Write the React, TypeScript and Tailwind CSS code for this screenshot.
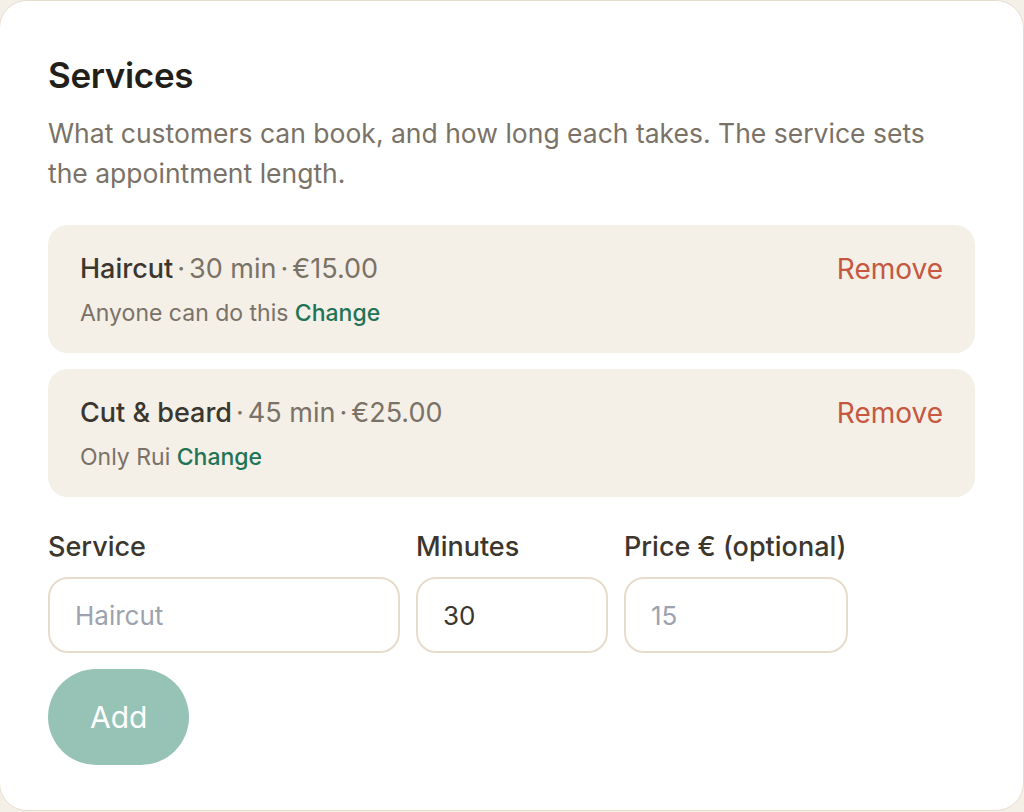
import { useState } from "react";

type Service = {
  id: string;
  name: string;
  minutes: number;
  price: number;
  who: string;
};

const initialServices: Service[] = [
  { id: "haircut", name: "Haircut", minutes: 30, price: 15, who: "Anyone can do this" },
  { id: "cut-beard", name: "Cut & beard", minutes: 45, price: 25, who: "Only Rui" },
];

const inputClass =
  "h-[76px] rounded-[20px] border-2 border-[#e6dccb] bg-white px-[25px] text-[26px] text-[#3b362e] outline-none placeholder:text-[#9ca3af] focus:border-[#97c2b6]";

const labelClass = "text-[27px] font-medium leading-[36px] text-[#3b362e]";

function ServiceRow({ service, onRemove }: { service: Service; onRemove: () => void }) {
  return (
    <div className="flex items-start justify-between rounded-[20px] bg-[#f4efe7] px-8 py-6">
      <div>
        <p className="text-[27px] leading-[40px] text-[#7a7266]">
          <span className="font-medium text-[#3b362e]">{service.name}</span>
          <span className="px-[4px]">·</span>
          {service.minutes} min
          <span className="px-[4px]">·</span>€{service.price.toFixed(2)}
        </p>
        <p className="mt-2 text-[23px] leading-[32px] text-[#7a7266]">
          {service.who}{" "}
          <button type="button" className="font-medium text-[#1f7356]">
            Change
          </button>
        </p>
      </div>
      <button
        type="button"
        onClick={onRemove}
        className="text-[28px] leading-[40px] text-[#c5583f]"
      >
        Remove
      </button>
    </div>
  );
}

export default function App() {
  const [services, setServices] = useState(initialServices);
  const [name, setName] = useState("");
  const [minutes, setMinutes] = useState("30");
  const [price, setPrice] = useState("");

  return (
    <div className="h-[812px] w-[1024px] bg-[#f4efe7] font-['Inter','Noto_Sans',sans-serif]">
      <div className="-ml-px h-[811px] w-[1025px] rounded-[28px] border border-[#e6dccb] bg-white pl-12 pr-12 pt-[52px]">
        <h2 className="text-[35px] font-semibold leading-[44px] tracking-[-0.01em] text-[#221f1a]">
          Services
        </h2>
        <p className="mt-4 max-w-[900px] text-[26.5px] leading-[40px] text-[#7a7266]">
          What customers can book, and how long each takes. The service sets the appointment
          length.
        </p>

        <div className="mt-8 flex flex-col gap-4">
          {services.map((s) => (
            <ServiceRow
              key={s.id}
              service={s}
              onRemove={() => setServices((list) => list.filter((x) => x.id !== s.id))}
            />
          ))}
        </div>

        <div className="mt-8 flex gap-4">
          <label className="flex w-[352px] flex-col gap-3">
            <span className={labelClass}>Service</span>
            <input
              value={name}
              onChange={(e) => setName(e.target.value)}
              placeholder="Haircut"
              className={inputClass}
            />
          </label>
          <label className="flex w-[192px] flex-col gap-3">
            <span className={labelClass}>Minutes</span>
            <input
              value={minutes}
              onChange={(e) => setMinutes(e.target.value)}
              inputMode="numeric"
              className={inputClass}
            />
          </label>
          <label className="flex w-[224px] flex-col gap-3">
            <span className={labelClass}>Price € (optional)</span>
            <input
              value={price}
              onChange={(e) => setPrice(e.target.value)}
              placeholder="15"
              inputMode="decimal"
              className={inputClass}
            />
          </label>
        </div>

        <button
          type="button"
          disabled={!name.trim()}
          className="mt-4 h-24 rounded-full bg-[#97c2b6] px-[42px] text-[30px] font-normal text-white"
        >
          Add
        </button>
      </div>
    </div>
  );
}
